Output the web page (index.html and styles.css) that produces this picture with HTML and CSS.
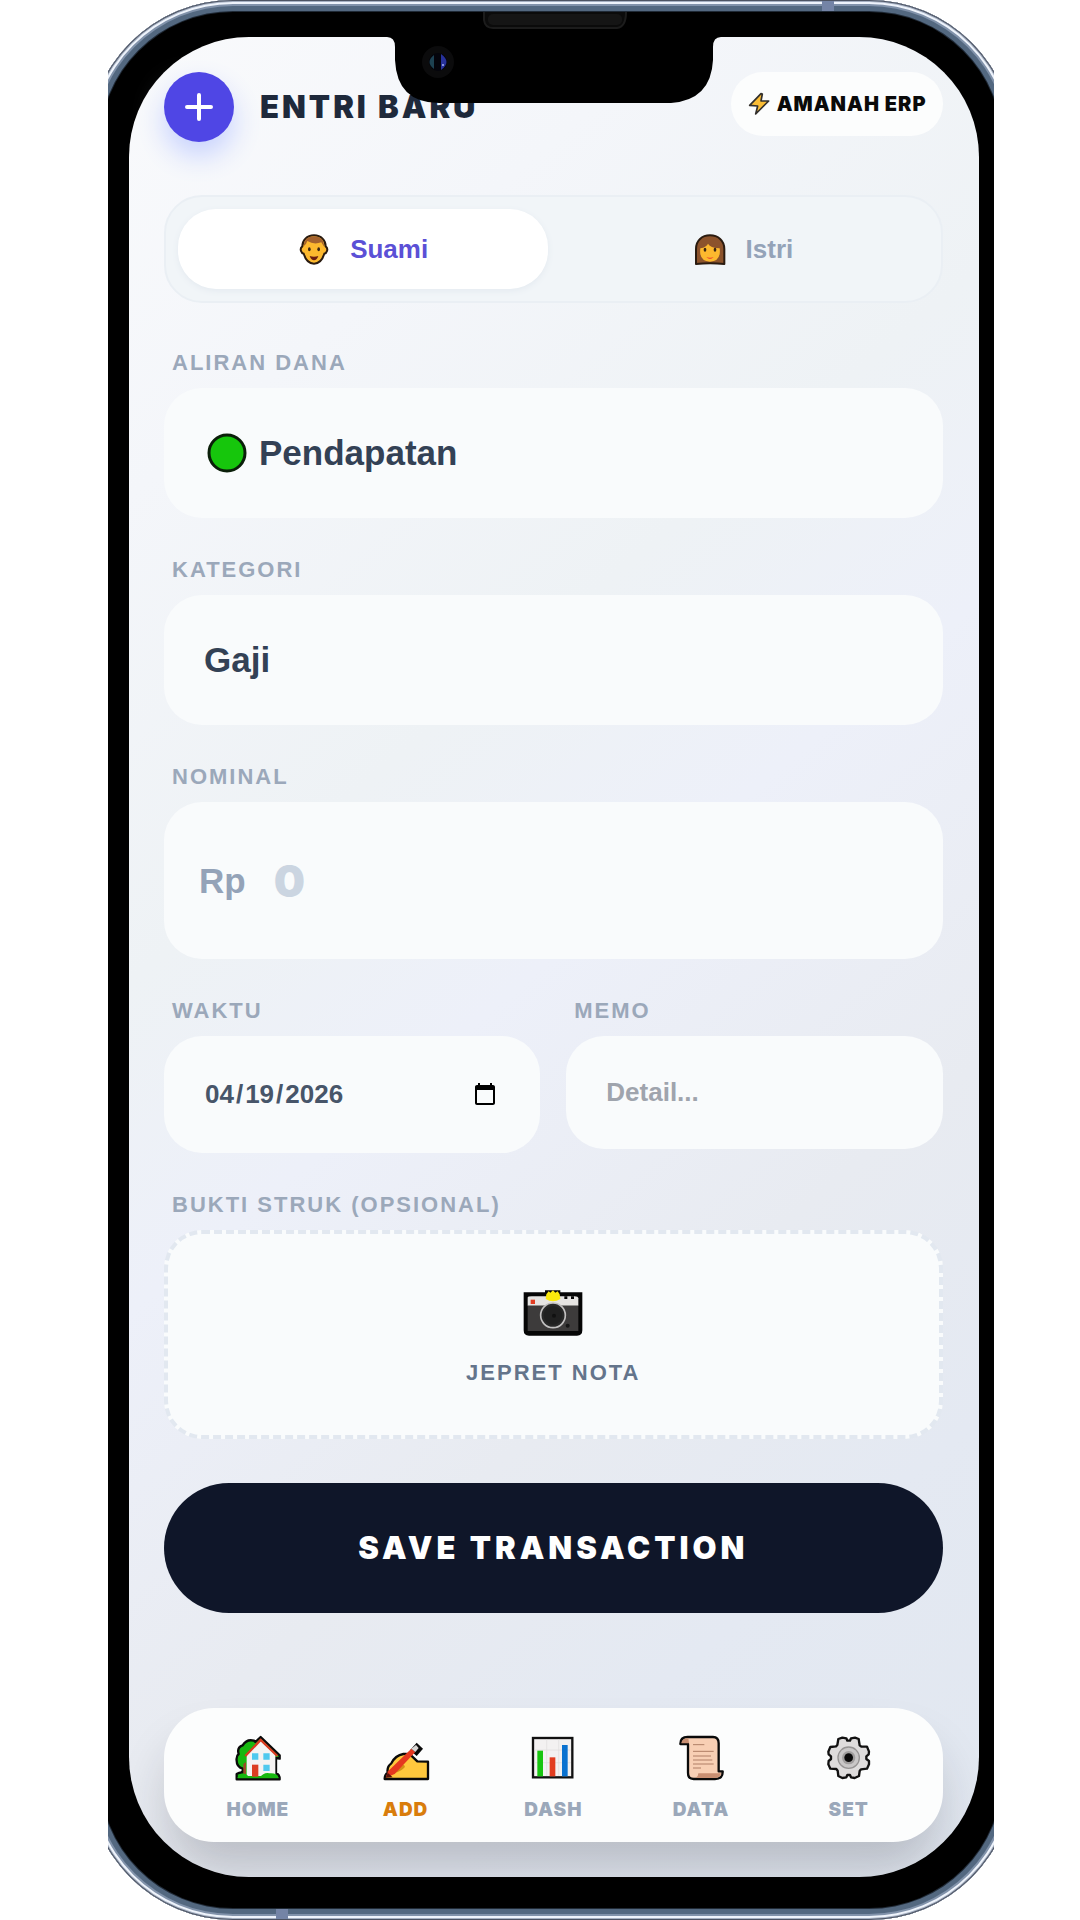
FILE: index.html
```html
<!DOCTYPE html>
<html lang="id">
<head>
<meta charset="utf-8">
<meta name="viewport" content="width=device-width, initial-scale=1">
<title>Entri Baru - Amanah ERP</title>
<link rel="stylesheet" href="styles.css">
</head>
<body>
<div class="stage">
<div class="bezel">
<main class="screen">
  <svg class="notch" viewBox="0 0 334 103" aria-hidden="true">
    <path d="M0 30V37Q8 37 8 47V60Q10 103 52 103H284Q324 100 326 60V47Q326 37 334 37V30Z" fill="#000"/>
    <path d="M97 12V20Q98 28 106 28H230Q239 27 239 12" fill="#0b0b0b" stroke="#1c1c1c" stroke-width="2"/>
    <rect x="101" y="14" width="134" height="11" rx="5" fill="#151515"/>
    <circle cx="51" cy="62" r="16" fill="#0b0b0c"/>
    <circle cx="51" cy="62" r="9" fill="#04040c"/>
    <path d="M47 55Q38 62 47 69Z" fill="#1d4152"/>
    <path d="M54 54Q65 62 54 70Z" fill="#27319a"/>
    <circle cx="56" cy="65" r="1" fill="#a9b4f5"/>
  </svg>

  <header class="topbar">
    <button class="add" type="button" aria-label="Tambah">
      <svg viewBox="0 0 28 28" aria-hidden="true"><path d="M14 2V26M2 14H26" stroke="#fff" stroke-width="4" stroke-linecap="round"/></svg>
    </button>
    <h1 class="title">ENTRI BARU</h1>
    <div class="brand">
      <svg class="bolt" viewBox="0 0 72 72" aria-hidden="true"><path d="M42 5L8 40L32 42L26 66L65 27L42 27L46 6Z" fill="#fbbd35" stroke="#33302c" stroke-width="5" stroke-linejoin="round"/></svg>
      <span>AMANAH ERP</span>
    </div>
  </header>

  <div class="toggle" role="group" aria-label="Pengguna">
    <button class="who who-active" type="button" aria-pressed="true">
      <svg class="face" viewBox="0 0 96 96" aria-hidden="true">
        <path d="M48 7C70 7 83 22 83 40Q90 45 87 54Q85 61 79 62Q70 92 48 92Q26 92 17 62Q11 61 9 54Q6 45 13 40C13 22 26 7 48 7Z" fill="#fdb92e" stroke="#2a1b10" stroke-width="6"/>
        <path d="M17 40Q18 10 48 10Q78 10 79 42Q73 34 70 28Q48 36 28 24Q24 36 17 40Z" fill="#a4622e"/>
        <ellipse cx="34" cy="49" rx="4" ry="6" fill="#3a2614"/><ellipse cx="62" cy="49" rx="4" ry="6" fill="#3a2614"/>
        <path d="M35 69Q48 73 61 69Q56 82 48 82Q40 82 35 69Z" fill="#6b1d10"/>
      </svg>
      <span>Suami</span>
    </button>
    <button class="who" type="button" aria-pressed="false">
      <svg class="face" viewBox="0 0 96 96" aria-hidden="true">
        <path d="M6 93V48C6 22 24 7 48 7S91 22 91 48V93Q48 88 6 93Z" fill="#8c532c" stroke="#2a1b10" stroke-width="6" stroke-linejoin="round"/>
        <path d="M19 46Q38 42 42 32Q48 44 77 46Q82 84 48 86Q14 84 19 46Z" fill="#fdb92e"/>
        <ellipse cx="33" cy="50" rx="4" ry="6" fill="#3a2614"/><ellipse cx="63" cy="50" rx="4" ry="6" fill="#3a2614"/>
        <path d="M37 72Q48 76 59 72Q48 84 37 72Z" fill="#ef4a2c"/>
      </svg>
      <span>Istri</span>
    </button>
  </div>

  <form class="form">
    <div class="group">
      <label class="label" for="aliran">ALIRAN DANA</label>
      <div class="field">
        <svg class="dot" viewBox="0 0 40 40" aria-hidden="true"><circle cx="20" cy="20" r="18" fill="#16c60c" stroke="#0b1f0a" stroke-width="3"/></svg>
        <select class="control control-lg" id="aliran"><option>Pendapatan</option></select>
      </div>
    </div>
    <div class="group">
      <label class="label" for="kategori">KATEGORI</label>
      <div class="field">
        <select class="control control-lg" id="kategori"><option>Gaji</option></select>
      </div>
    </div>
    <div class="group">
      <label class="label" for="nominal">NOMINAL</label>
      <div class="field field-amount">
        <span class="currency">Rp</span>
        <input class="control amount" id="nominal" type="text" inputmode="numeric" placeholder="0">
      </div>
    </div>
    <div class="pair">
      <div class="group">
        <label class="label" for="waktu">WAKTU</label>
        <input class="control box box-date" id="waktu" type="date" value="2026-04-19">
      </div>
      <div class="group">
        <label class="label" for="memo">MEMO</label>
        <input class="control box box-memo" id="memo" type="text" placeholder="Detail...">
      </div>
    </div>
    <div class="group">
      <span class="label" id="bukti">BUKTI STRUK (OPSIONAL)</span>
      <button class="upload" type="button" aria-describedby="bukti">
        <svg class="camera" viewBox="0 0 180 144" aria-hidden="true">
          <path d="M2 10H66V4H112V10H178V124Q178 140 162 140H18Q2 140 2 124Z" fill="#060606"/>
          <path d="M14 26Q14 22 26 22H154Q166 22 166 28V50H14Z" fill="#e6e4e2"/>
          <path d="M14 50H166V126H14Z" fill="#3d3b3b"/>
          <rect x="23" y="32" width="13" height="13" fill="#e23d23"/>
          <path d="M124 22h9v8h-9zM144 22h9v8h-9z" fill="#060606"/>
          <path d="M70 16L77 7L82 11L90 4L97 11L104 7L110 16L112 30Q90 44 68 30Z" fill="#fbe90d"/>
          <circle cx="90" cy="79" r="37" fill="#282828" stroke="#c2c0c0" stroke-width="5"/>
          <circle cx="90" cy="79" r="28" fill="#202020"/><circle cx="93" cy="80" r="6" fill="#111"/>
          <circle cx="134" cy="110" r="6" fill="#161616"/>
        </svg>
        <span>JEPRET NOTA</span>
      </button>
    </div>
    <button class="save" type="submit">SAVE TRANSACTION</button>
  </form>

  <nav class="nav" aria-label="Menu utama">
    <a class="tab" href="#home">
      <svg viewBox="0 0 144 144" aria-hidden="true">
        <path d="M8 136V120Q18 114 26 116V104Q8 98 8 80Q6 66 14 60Q8 40 26 34Q38 14 60 20L64 24L80 9L137 64V74L126 72V118Q137 120 137 136Z" fill="#17b80f" stroke="#0a0a0a" stroke-width="7" stroke-linejoin="round"/>
        <path d="M28 90V120H36V84Z" fill="#9b4a24"/>
        <path d="M38 62L80 20L124 62V126H38Z" fill="#f5f3f2"/>
        <path d="M34 66L80 18L130 66" fill="none" stroke="#d93a20" stroke-width="7"/>
        <path d="M54 58h19v19H54zM88 58h19v19H88zM88 92h19v19H88z" fill="#50c9ee"/>
        <rect x="54" y="92" width="19" height="36" fill="#dc3d22"/>
        <path d="M10 132Q20 112 38 122L50 132ZM76 132Q90 114 106 118Q130 116 134 132Z" fill="#17b80f"/>
      </svg>
      <span>HOME</span>
    </a>
    <a class="tab tab-active" href="#add">
      <svg viewBox="0 0 144 144" aria-hidden="true">
        <path d="M8 135Q8 122 17 116Q14 98 28 88Q40 64 64 60Q78 59 84 61L106 82L138 83V135Z" fill="#ffc83d" stroke="#0a0a0a" stroke-width="7" stroke-linejoin="round"/>
        <path d="M26 112Q44 122 66 102Q72 96 64 92Z" fill="#d49017"/>
        <path d="M84 49L104 26L123 44L104 66Z" fill="#0a0a0a"/>
        <path d="M11 131L18 112L88 44L100 54L38 120Z" fill="#e5381f"/>
        <path d="M11 131L17 116L32 130Z" fill="#5a120a"/>
        <path d="M88 44L102 33L110 42L100 54Z" fill="#d8d6d4"/>
      </svg>
      <span>ADD</span>
    </a>
    <a class="tab" href="#dash">
      <svg viewBox="0 0 144 144" aria-hidden="true">
        <rect x="12" y="12" width="118" height="118" fill="#f3f1f1" stroke="#111" stroke-width="7"/>
        <path d="M16 48H126M16 86H126M53 16V126M89 16V126" stroke="#dedcdc" stroke-width="2"/>
        <rect x="25" y="50" width="17" height="77" fill="#18c510"/>
        <rect x="62" y="70" width="17" height="57" fill="#e23d20"/>
        <rect x="99" y="33" width="17" height="94" fill="#0a72d0"/>
      </svg>
      <span>DASH</span>
    </a>
    <a class="tab" href="#data">
      <svg viewBox="0 0 144 144" aria-hidden="true">
        <path d="M10 30Q10 9 32 9H108Q125 9 125 28V112H137Q138 135 114 135H50Q33 135 33 116V30Z" fill="#f8cfb4" stroke="#0a0a0a" stroke-width="7" stroke-linejoin="round"/>
        <path d="M13 28Q16 12 34 13L36 28ZM64 118H132Q130 132 112 132H56Q64 128 64 118Z" fill="#c98f72"/>
        <path d="M48 32H82M48 52H110M48 66H102M48 78H106M48 90H110M48 102H72" stroke="#b07f66" stroke-width="3"/>
      </svg>
      <span>DATA</span>
    </a>
    <a class="tab" href="#set">
      <svg viewBox="0 0 144 144" aria-hidden="true">
        <path d="M52 11L64 13L67 20H75L78 13L90 11L101 15L104 34L109 38L126 38L132 53L131 61L124 67V75L132 81L132 91L126 104L108 106L104 111L102 126L89 132L78 130L75 123H67L64 130L52 132L40 126L38 110L34 105L16 104L10 91L11 81L18 75V67L11 61L10 53L16 39L33 37L37 33L40 15Z" fill="#dedcdc" stroke="#111" stroke-width="7" stroke-linejoin="round"/>
        <circle cx="71" cy="71" r="32" fill="#c9c7c7" stroke="#969494" stroke-width="4"/>
        <circle cx="71" cy="71" r="20" fill="#a09e9e"/><circle cx="71" cy="71" r="13" fill="#090909"/>
      </svg>
      <span>SET</span>
    </a>
  </nav>
</main>
</div>
</div>
</body>
</html>
```
FILE: styles.css
```css
* { box-sizing: border-box; }

body {
  margin: 0;
  background: #fff;
  font-family: "Liberation Sans", Arial, sans-serif;
  font-weight: 700;
}

button, input, select { font: inherit; color: inherit; border: 0; margin: 0; }

.stage { margin: 0 8% 0 10%; overflow: hidden; }

/* Phone body: metal rim drawn with stacked inset rings */
.bezel {
  position: relative;
  margin: 0 -20px;
  padding: 37px 35px 43px 41px;
  border-radius: 145px;
  background: #000;
  box-shadow:
    inset 0 0 0 1px #4c5362,
    inset 0 0 0 2px #a5b0c2,
    inset 0 0 0 4px #eef3fb,
    inset 0 0 0 6px #8192aa,
    inset 0 0 0 11px #536880,
    inset 0 0 0 12px #202a36;
}

/* Antenna bands on the rim */
.bezel::before,
.bezel::after {
  content: "";
  position: absolute;
  width: 12px;
  height: 10px;
  background: #7484a6;
}
.bezel::before { top: 1px; right: 180px; }
.bezel::after { bottom: 1px; left: 188px; }

.screen {
  position: relative;
  display: flex;
  flex-direction: column;
  padding: 35px 36px 35px 35px;
  border-radius: 120px;
  background: linear-gradient(140deg, #f9fafc 0%, #f4f6fa 18%, #eef2f5 37%, #edf0f9 50%, #e8ebf1 68%, #e4e9f2 82%, #e1e7f0 100%);
}

.notch {
  position: absolute;
  top: -37px;
  left: 50%;
  width: 334px;
  height: 103px;
  transform: translateX(-50%);
}

.topbar { display: flex; align-items: flex-start; }

.add {
  display: grid;
  place-items: center;
  width: 70px;
  height: 70px;
  padding: 0;
  border-radius: 50%;
  background: #4f46e5;
  box-shadow: 0 14px 28px #c7d2fe;
}
.add svg { width: 28px; height: 28px; }

.title {
  margin: 0 auto 0 26px;
  font: 900 31px/70px Inter, "Liberation Sans", sans-serif;
  letter-spacing: 3px;
  color: #1e293b;
  white-space: nowrap;
}

.brand {
  display: flex;
  align-items: center;
  gap: 6px;
  height: 64px;
  padding: 0 16px;
  border-radius: 32px;
  background: #fcfdfd;
  font: 900 20px/24px Inter, "Liberation Sans", sans-serif;
  letter-spacing: 1px;
  color: #0a0a0a;
  white-space: nowrap;
}
.bolt { width: 24px; height: 24px; }

.toggle {
  display: grid;
  grid-template-columns: 1fr 1fr;
  gap: 10px;
  margin-top: 53px;
  padding: 12px;
  border: 2px solid #eaeff4;
  border-radius: 38px;
  background: #f1f5f8;
}
.who {
  display: flex;
  align-items: center;
  justify-content: center;
  gap: 20px;
  height: 80px;
  border-radius: 38px;
  background: none;
  font-size: 26px;
  line-height: 30px;
  color: #94a3b8;
}
.who-active {
  background: #fff;
  color: #5b50d6;
  box-shadow: 0 2px 6px #e4eaf0;
}
.face { width: 32px; height: 32px; }

.form { display: flex; flex-direction: column; gap: 40px; margin-top: 48px; }
.group { display: flex; flex-direction: column; gap: 13px; min-width: 0; }
.pair { display: grid; grid-template-columns: 1fr 1fr; gap: 26px; align-items: start; }

.label {
  padding-left: 8px;
  font-size: 22px;
  line-height: 24px;
  letter-spacing: 2px;
  color: #9ba8ba;
}

.field {
  display: flex;
  align-items: center;
  gap: 12px;
  height: 130px;
  padding: 0 40px;
  border-radius: 38px;
  background: #f9fbfc;
}
.field-amount { gap: 28px; height: 157px; padding: 0 35px; }
.dot { width: 40px; height: 40px; margin-left: 3px; }

.control {
  appearance: none;
  min-width: 0;
  padding: 0;
  outline: 0;
  background: transparent;
  color: #334155;
}
.control-lg { flex: 1; font-size: 35px; line-height: 40px; }
.currency { font-size: 35px; line-height: 40px; color: #94a3b8; }
.amount { flex: 1; font: 900 44px/52px Inter, "Liberation Sans", sans-serif; }
.amount::placeholder { color: #cbd5e1; }

.box {
  width: 100%;
  padding: 0 40px;
  border-radius: 38px;
  background: #f9fbfc;
  font-size: 26px;
  color: #475569;
}
.box-date { height: 117px; }
.box-date::-webkit-datetime-edit-text { padding: 0 1px; }
.box-memo { height: 113px; }
.box-memo::placeholder { color: #9fa4ad; }

.upload {
  display: flex;
  flex-direction: column;
  align-items: center;
  justify-content: center;
  gap: 24px;
  height: 209px;
  padding: 4px 0 0;
  border: 4px dashed #e2e8f0;
  border-radius: 38px;
  background: #f9fbfc;
  font-size: 22px;
  line-height: 24px;
  letter-spacing: 2px;
  color: #64748b;
}
.camera { width: 60px; height: 48px; }

.save {
  height: 130px;
  margin-top: 4px;
  border-radius: 65px;
  background: #0f1629;
  font: 900 31px/40px Inter, "Liberation Sans", sans-serif;
  letter-spacing: 4px;
  color: #fff;
}

.nav {
  display: grid;
  grid-template-columns: repeat(5, 1fr);
  margin-top: 95px;
  padding: 26px 20px 20px;
  border-radius: 50px;
  background: #fcfdfd;
  box-shadow: 0 34px 50px -6px rgba(30, 32, 40, 0.22);
  clip-path: inset(-60px -36px -35px -35px round 0 0 120px 120px);
}
.tab {
  display: flex;
  flex-direction: column;
  align-items: center;
  gap: 16px;
  font: 900 19px/24px Inter, "Liberation Sans", sans-serif;
  letter-spacing: 1px;
  color: #9ba8ba;
  text-decoration: none;
}
.tab-active { color: #d97d0c; }
.tab svg { width: 48px; height: 48px; }
```
